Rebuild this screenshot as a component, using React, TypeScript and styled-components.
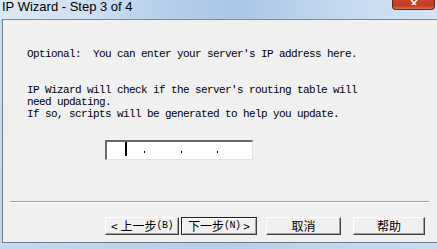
import React from "react";
import styled, { createGlobalStyle } from "styled-components";

const Global = createGlobalStyle`
  html, body { margin: 0; padding: 0; background: #f0f0f0; overflow: hidden; }
  #root { width: 437px; height: 249px; }
`;

const Window = styled.div`
  width: 437px;
  height: 249px;
  display: flex;
  flex-direction: column;
  background: #c9dbef;
  overflow: hidden;
`;

const TitleBar = styled.div`
  height: 19px;
  flex: none;
  display: flex;
  align-items: flex-start;
  justify-content: space-between;
  background: linear-gradient(
    to right,
    #dde8f5 0%,
    #cddff2 20%,
    #b4cdea 40%,
    #aac6e7 55%,
    #c2d7ef 75%,
    #d4e4f4 100%
  );
`;

const Title = styled.div`
  font-family: "Liberation Sans", Arial, sans-serif;
  font-size: 13px;
  line-height: 13px;
  color: #000;
  padding-left: 2px;
`;

const CloseButton = styled.div`
  width: 43px;
  height: 10px;
  margin-right: 2px;
  box-sizing: border-box;
  border: 1px solid #6e2418;
  border-top: none;
  border-radius: 0 0 4px 4px;
  background: linear-gradient(to bottom, #c9462c 0%, #c03c22 60%, #d66e50 100%);
  display: flex;
  justify-content: center;
  align-items: flex-start;
`;

const CloseGlyph = styled.svg`
  display: block;
`;

const Frame = styled.div`
  flex: 1;
  display: flex;
  padding-left: 2px;
  background: linear-gradient(to bottom, #cbdcee, #c3d7ec);
  min-height: 0;
`;

const Panel = styled.div`
  flex: 1;
  display: flex;
  flex-direction: column;
  background: #f0f0f0;
  border-top: 1px solid #7d8a99;
  border-left: 1px solid #6f7c8c;
  border-bottom: 1px solid #6f7c8c;
  min-width: 0;
`;

const TextBlock = styled.div`
  margin-top: 28px;
  margin-left: 24px;
  font-family: "Liberation Mono", "Courier New", monospace;
  font-size: 11px;
  letter-spacing: -0.6px;
  line-height: 12px;
  color: #000;
  white-space: pre;
`;

const Para = styled.p<{ $gap?: number }>`
  margin: ${(p) => p.$gap ?? 0}px 0 0 0;
`;

const IpField = styled.div`
  margin-top: 20px;
  margin-left: 102px;
  width: 148px;
  height: 20px;
  box-sizing: border-box;
  background: #fff;
  border-top: 2px solid #6a6a6a;
  border-left: 2px solid #6a6a6a;
  border-right: 1px solid #e3e3e3;
  border-bottom: 1px solid #e3e3e3;
  display: grid;
  grid-template-columns: 18px 20px 37px 36px 1fr;
  align-items: start;
`;

const Cursor = styled.span`
  grid-column: 1;
  justify-self: end;
  width: 2px;
  height: 14px;
  background: #000;
  margin-right: -2px;
`;

const Dot = styled.span<{ $col: number }>`
  grid-column: ${(p) => p.$col};
  justify-self: end;
  width: 1px;
  height: 2px;
  margin-top: 9px;
  background: #000;
`;

const Separator = styled.div`
  margin: 41px 8px 0 7px;
  height: 1px;
  background: #a0a0a0;
  border-bottom: 1px solid #ffffff;
`;

const ButtonRow = styled.div`
  display: flex;
  margin-top: 14px;
  margin-left: 102px;
`;

const Button = styled.div<{ $w: number; $gap: number; $default?: boolean }>`
  width: ${(p) => p.$w}px;
  height: 18px;
  margin-left: ${(p) => p.$gap}px;
  box-sizing: border-box;
  background: #f0f0f0;
  border-top: 1px solid ${(p) => (p.$default ? "#202020" : "#ffffff")};
  border-left: 1px solid ${(p) => (p.$default ? "#202020" : "#ffffff")};
  border-right: 1px solid #404040;
  border-bottom: 1px solid #404040;
  box-shadow: ${(p) =>
    p.$default
      ? "inset 1px 1px 0 #ffffff, inset -1px -1px 0 #a0a0a0"
      : "inset -1px -1px 0 #a0a0a0"};
  display: flex;
  align-items: center;
  justify-content: center;
  font-family: "Noto Sans CJK SC", "Liberation Sans", sans-serif;
  font-size: 12px;
  line-height: 12px;
  color: #000;
  white-space: pre;
`;

const Small = styled.span`
  font-family: "Liberation Mono", monospace;
  font-size: 10px;
  letter-spacing: -0.5px;
`;

const Spacer = styled.div`
  flex: 1;
`;

const BottomFrame = styled.div`
  height: 6px;
  flex: none;
  background: linear-gradient(to right, #c4d8ee, #b6cfea 50%, #c9dcf0);
`;

export default function App() {
  return (
    <>
      <Global />
      <Window>
        <TitleBar>
          <Title>IP Wizard - Step 3 of 4</Title>
          <CloseButton>
            <CloseGlyph width="10" height="5" viewBox="0 0 10 5">
              <path d="M2 0 L5 3 L8 0 M3 5 L5 3 L7 5" stroke="#fff" strokeWidth="1.6" fill="none" />
            </CloseGlyph>
          </CloseButton>
        </TitleBar>
        <Frame>
          <Panel>
            <TextBlock>
              <Para>Optional:  You can enter your server's IP address here.</Para>
              <Para $gap={24}>IP Wizard will check if the server's routing table will</Para>
              <Para>need updating.</Para>
              <Para>If so, scripts will be generated to help you update.</Para>
            </TextBlock>
            <IpField>
              <Cursor />
              <Dot $col={2} />
              <Dot $col={3} />
              <Dot $col={4} />
            </IpField>
            <Separator />
            <ButtonRow>
              <Button $w={74} $gap={0}>
                {"< 上一步"}<Small>(B)</Small>
              </Button>
              <Button $w={76} $gap={2} $default>
                {"下一步"}<Small>(N)</Small>{" >"}
              </Button>
              <Button $w={75} $gap={9}>取消</Button>
              <Button $w={72} $gap={12}>帮助</Button>
            </ButtonRow>
            <Spacer />
          </Panel>
        </Frame>
        <BottomFrame />
      </Window>
    </>
  );
}
